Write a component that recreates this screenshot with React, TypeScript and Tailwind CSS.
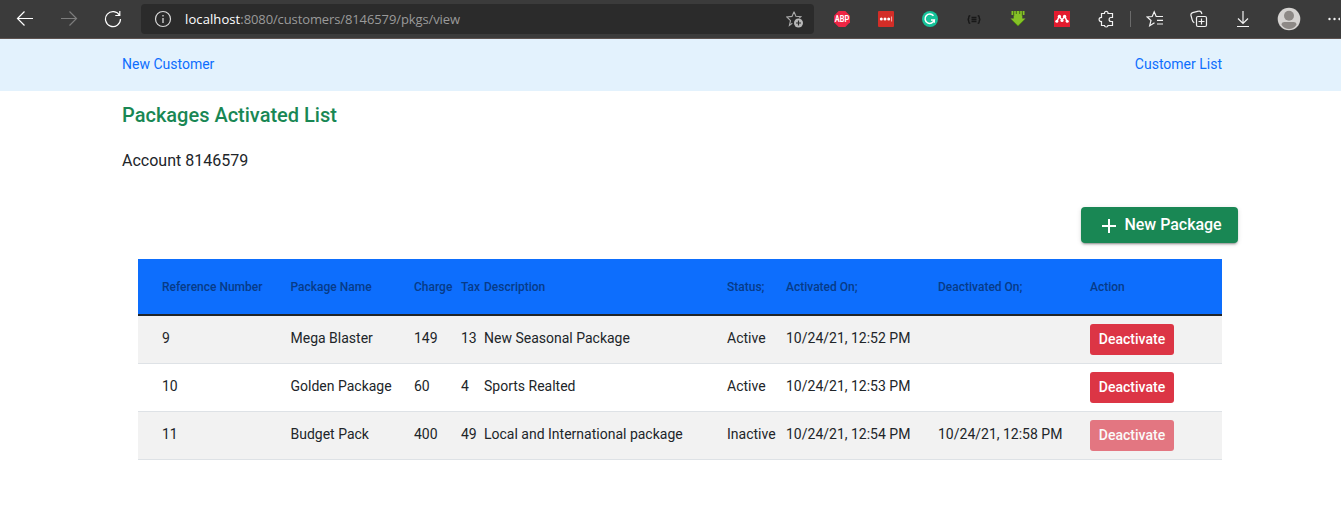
import React from "react";

type Row = {
  ref: string;
  name: string;
  charge: string;
  tax: string;
  description: string;
  status: string;
  activated: string;
  deactivated: string;
};

const rows: Row[] = [
  { ref: "9", name: "Mega Blaster", charge: "149", tax: "13", description: "New Seasonal Package", status: "Active", activated: "10/24/21, 12:52 PM", deactivated: "" },
  { ref: "10", name: "Golden Package", charge: "60", tax: "4", description: "Sports Realted", status: "Active", activated: "10/24/21, 12:53 PM", deactivated: "" },
  { ref: "11", name: "Budget Pack", charge: "400", tax: "49", description: "Local and International package", status: "Inactive", activated: "10/24/21, 12:54 PM", deactivated: "10/24/21, 12:58 PM" },
];

const columns = ["Reference Number", "Package Name", "Charge", "Tax", "Description", "Status;", "Activated On;", "Deactivated On;", "Action"];

const grid = "grid grid-cols-[128.5px_123.5px_47px_23px_243px_59px_152px_152px_132px] pl-6";

function Toolbar() {
  return (
    <header className="flex h-[39px] items-center border-b border-[#5e5350] bg-[#3b3b3b] text-white">
      <svg className="ml-4 shrink-0" width="18" height="18" viewBox="0 0 18 18" fill="none" stroke="#fff" strokeWidth="1.2">
        <path d="M17 8.500H1.500M8.500 1.500l-7 7 7 7" />
      </svg>
      <svg className="ml-[26px] shrink-0" width="18" height="18" viewBox="0 0 18 18" fill="none" stroke="#7d7d7d" strokeWidth="1.2">
        <path d="M1 8.500h15.500M9.500 1.500l7 7-7 7" />
      </svg>
      <svg className="ml-[26px] shrink-0" width="18" height="18" viewBox="0 0 18 18" fill="none" stroke="#fff" strokeWidth="1.2">
        <path d="M15.600 5.500A7.500 7.500 0 1 0 16.500 9M15.800 1v4.500h-4.500" />
      </svg>
      <div className="ml-[19px] flex h-[30px] w-[673px] shrink-0 items-center rounded-[4px] bg-[#2b2b2b]">
        <svg className="ml-[13px]" width="18" height="18" viewBox="0 0 18 18" fill="none" stroke="#d8d8d8">
          <circle cx="9" cy="9" r="7.500" strokeWidth="1.200" />
          <path d="M9 8v5" strokeWidth="1.300" />
          <path d="M9 5v1.500" strokeWidth="1.300" />
        </svg>
        <div className="ml-[13px] w-[600px] whitespace-nowrap font-['Open_Sans',sans-serif] text-[13px] leading-5 tracking-[-0.11px] text-[#9a9a9a]">
          <span className="tracking-[0.1px] text-white">localhost</span>:8080/customers/8146579/pkgs/view
        </div>
        <svg className="ml-px" width="18" height="18" viewBox="0 0 18 18" fill="none">
          <path d="M8 1.700l1.900 4.600 5 .4-1.600 1.500M6.300 13.200L3.400 15.400l1.100-4.800L.9 7l5.100-.6L8 1.700" stroke="#a8a8a8" strokeWidth="1.100" />
          <circle cx="12.500" cy="13" r="4.500" fill="#b8b8b8" />
          <path d="M12.500 10.500v5M10 13h5" stroke="#2b2b2b" strokeWidth="1.200" />
        </svg>
      </div>
      <svg className="ml-5 shrink-0" width="16" height="16" viewBox="0 0 16 16">
        <path d="M4.700 0h6.600L16 4.700v6.600L11.300 16H4.700L0 11.300V4.700z" fill="#ee2544" />
        <text x="8" y="11" textAnchor="middle" fontFamily="Roboto" fontWeight="700" fontSize="8.500" textLength="14.500" lengthAdjust="spacingAndGlyphs" fill="#fff">ABP</text>
      </svg>
      <svg className="ml-7 shrink-0" width="16" height="16" viewBox="0 0 16 16">
        <rect width="16" height="16" rx="1" fill="#d32d27" />
        <circle cx="3.300" cy="8" r="1.500" fill="#fff" />
        <circle cx="7" cy="8" r="1.500" fill="#fff" />
        <circle cx="10.700" cy="8" r="1.500" fill="#fff" />
        <path d="M13.600 5.500v5" stroke="#f4b6b3" />
      </svg>
      <svg className="ml-7 shrink-0" width="16" height="16" viewBox="0 0 16 16" fill="none">
        <circle cx="8" cy="8" r="8" fill="#15c39a" />
        <path d="M11.500 4.800A4.700 4.700 0 1 0 12.300 9H9" stroke="#fff" strokeWidth="1.500" />
        <path d="M12.300 8.700v3" stroke="#fff" strokeWidth="1.300" />
      </svg>
      <svg className="ml-7 shrink-0" width="16" height="16" viewBox="0 0 16 16" fill="none" stroke="#181818" strokeWidth="1.400">
        <path d="M4.300 4.700H4c-.9 0-1.200.5-1.200 1.300S2.500 8.500 1.500 8.500C2.500 8.500 2.800 9.500 2.800 10.700S3 12.300 4 12.300h.3M11.700 4.700h.3c.9 0 1.200.5 1.200 1.300s.3 2.500 1.300 2.500c-1 0-1.300 1-1.300 2.200S13 12.300 12 12.300h-.3M5.500 6.500h5M5.500 8.500h5M5.500 10.500h5" />
      </svg>
      <svg className="ml-7 shrink-0" width="16" height="16" viewBox="0 0 16 16">
        <path d="M3.700 1h8.600v6.500h3.200L8 14.800.5 7.500h3.200z" fill="#85c226" />
        <path d="M1.500 0H14.500V4h-2V2h-9V4h-2z" fill="#85c226" />
        <path d="M3.700 0v5M6.300 0v3M9.700 0v3M12.300 0v5" stroke="#3f5d1c" strokeWidth=".9" />
        <path d="M2.500 9.500L8 14.900l5.500-5.400" fill="none" stroke="#4f8b12" />
      </svg>
      <svg className="ml-7 shrink-0" width="16" height="16" viewBox="0 0 16 16" fill="none">
        <rect width="16" height="16" fill="#e31b2e" />
        <path d="M2.900 10.300C4.100 9 4 7 5.200 5.700L8 8.700l2.800-3C12 7 11.900 9 13.100 10.300" stroke="#fff" strokeWidth="1.500" />
        <circle cx="5.400" cy="5.500" r="1.700" fill="#fff" />
        <circle cx="10.600" cy="5.500" r="1.700" fill="#fff" />
        <circle cx="2.800" cy="10.200" r="1.500" fill="#fff" />
        <circle cx="8" cy="9.500" r="1.600" fill="#fff" />
        <circle cx="13.200" cy="10.200" r="1.500" fill="#fff" />
      </svg>
      <svg className="ml-7 shrink-0" width="18" height="18" viewBox="0 0 18 18" fill="none" stroke="#f2f2f2" strokeWidth="1.200">
        <path d="M3.500 3.500H6.500C6 .7 10.500.7 10 3.500H14.500V7.500H13C10.500 7.500 10.500 11.500 13 11.500H14.500V15.500H10C10 17.500 6.500 17.500 6.500 15.500H3.500V11.500C.3 12 .3 7 3.500 7.500Z" />
      </svg>
      <div className="ml-[14px] h-4 w-px shrink-0 bg-[#6b6b6b]" />
      <svg className="ml-[15px] shrink-0" width="18" height="18" viewBox="0 0 18 18" fill="none" stroke="#f2f2f2" strokeWidth="1.200">
        <path d="M16.500 6.500H10.200L8.200 1.800 6.200 6.500 1.200 7 5 10.500 3.700 15.700 8.500 12.700M11 10.300h6M11 14h6M11 6.500h6" />
      </svg>
      <svg className="ml-[26px] shrink-0" width="18" height="18" viewBox="0 0 18 18" fill="none" stroke="#f2f2f2" strokeWidth="1.200">
        <path d="M4.300 12.700C3 12 2.500 11 2.200 9.800L1 5.500C.6 4 1.500 3 2.700 2.600L8.500 1.200c1.300-.4 2.700.3 3 1.600l.4 1.200" />
        <rect x="6.500" y="6.500" width="10" height="10" rx="1.500" />
        <path d="M11.500 8.500v6M8.500 11.500h6" />
      </svg>
      <svg className="ml-[26px] shrink-0" width="18" height="18" viewBox="0 0 18 18" fill="none" stroke="#f2f2f2" strokeWidth="1.200">
        <path d="M9 1v12M4 8.500l5 5 5-5M3 16.500h12" />
      </svg>
      <svg className="ml-[25px] shrink-0" width="24" height="24" viewBox="0 0 24 24">
        <circle cx="12" cy="12" r="11.300" fill="#d5d3d1" />
        <circle cx="12" cy="8.800" r="5" fill="#8d8986" />
        <path d="M4.500 17.800C4.500 15.700 6 15 7.500 15h9c1.500 0 3 .7 3 2.800C17.500 21 15 22 12 22s-5.500-1-7.500-4.200z" fill="#8d8986" />
      </svg>
      <svg className="ml-[25px] shrink-0" width="14" height="18" viewBox="0 0 14 18" fill="#f2f2f2">
        <circle cx="3.500" cy="9" r="1.200" />
        <circle cx="8.500" cy="9" r="1.200" />
        <circle cx="13.500" cy="9" r="1.200" />
      </svg>
    </header>
  );
}

export default function App() {
  return (
    <div className="h-[519px] w-[1341px] overflow-hidden bg-white font-['Roboto',sans-serif] text-[#212529]">
      <Toolbar />
      <nav className="flex h-[52px] items-center justify-between bg-[#e3f2fd] pr-[119px] pb-0.5 pl-[122px] text-sm text-[#0d6efd]">
        <a>New Customer</a>
        <a>Customer List</a>
      </nav>
      <main className="pr-[103px] pl-[122px]">
        <h2 className="pt-2 text-xl leading-8 font-medium text-[#198754]">Packages Activated List</h2>
        <p className="mt-[18px] text-base leading-6">Account 8146579</p>
        <div className="mt-[34px] flex justify-end">
          <button className="flex h-9 w-[157px] items-center rounded-[4px] bg-[#198754] pl-4 text-base font-medium text-white shadow-[0_3px_1px_-2px_rgba(0,0,0,.2),0_2px_2px_0_rgba(0,0,0,.14),0_1px_5px_0_rgba(0,0,0,.12)]">
            <svg className="mt-0.5" width="24" height="24" viewBox="0 0 24 24" fill="#fff">
              <path d="M19 13h-6v6h-2v-6H5v-2h6V5h2v6h6z" />
            </svg>
            <span className="ml-[3.5px] whitespace-nowrap tracking-[-0.03px]">New Package</span>
          </button>
        </div>
        <div className="mt-4 ml-4 w-[1084px]">
          <div className={`${grid} h-[57px] items-center border-b-2 border-[#212529] bg-[#0d6efd] text-xs font-medium text-[#073b88]`}>
            {columns.map((c) => (
              <div key={c} className="whitespace-nowrap">{c}</div>
            ))}
          </div>
          {rows.map((r, i) => (
            <div key={r.ref} className={`${grid} h-12 border-b border-[#dee2e6] pt-2 text-sm leading-[28px] whitespace-nowrap ${i % 2 === 0 ? "bg-[#f2f2f2]" : "bg-white"}`}>
              <div>{r.ref}</div>
              <div>{r.name}</div>
              <div>{r.charge}</div>
              <div>{r.tax}</div>
              <div>{r.description}</div>
              <div>{r.status}</div>
              <div>{r.activated}</div>
              <div>{r.deactivated}</div>
              <div>
                <button className={`block h-[31px] w-[84px] rounded-[3px] bg-[#dc3545] pb-0.5 text-center text-sm font-medium text-white ${r.deactivated ? "opacity-65" : ""}`}>Deactivate</button>
              </div>
            </div>
          ))}
        </div>
      </main>
    </div>
  );
}
